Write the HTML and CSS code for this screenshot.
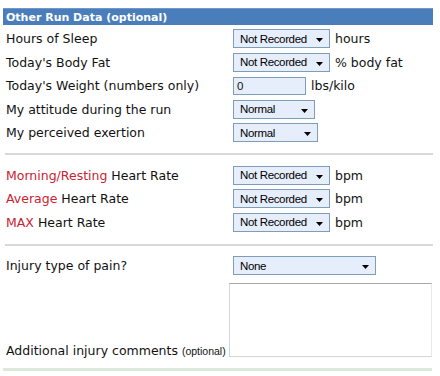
FILE: index.html
```html
<!DOCTYPE html>
<html>
<head>
<meta charset="utf-8">
<link rel="stylesheet" href="styles.css">
</head>
<body>
<div class="panel">
  <div class="header">Other Run Data (optional)</div>

  <div class="section first">
    <div class="row">
      <div class="label">Hours of Sleep</div>
      <div class="field"><span class="select w97">Not Recorded<svg class="arrow" width="7" height="4" viewBox="0 0 7 4"><path d="M0 0H7L3.5 4Z"/></svg></span><span class="unit">hours</span></div>
    </div>
    <div class="row">
      <div class="label">Today's Body Fat</div>
      <div class="field"><span class="select w97">Not Recorded<svg class="arrow" width="7" height="4" viewBox="0 0 7 4"><path d="M0 0H7L3.5 4Z"/></svg></span><span class="unit">% body fat</span></div>
    </div>
    <div class="row">
      <div class="label">Today's Weight (numbers only)</div>
      <div class="field"><span class="input">0</span><span class="unit">lbs/kilo</span></div>
    </div>
    <div class="row">
      <div class="label">My attitude during the run</div>
      <div class="field"><span class="select w82">Normal<svg class="arrow" width="7" height="4" viewBox="0 0 7 4"><path d="M0 0H7L3.5 4Z"/></svg></span></div>
    </div>
    <div class="row">
      <div class="label">My perceived exertion</div>
      <div class="field"><span class="select w85">Normal<svg class="arrow" width="7" height="4" viewBox="0 0 7 4"><path d="M0 0H7L3.5 4Z"/></svg></span></div>
    </div>
  </div>

  <div class="sep"></div>

  <div class="section">
    <div class="row">
      <div class="label"><span class="red">Morning/Resting</span> Heart Rate</div>
      <div class="field"><span class="select w97">Not Recorded<svg class="arrow" width="7" height="4" viewBox="0 0 7 4"><path d="M0 0H7L3.5 4Z"/></svg></span><span class="unit">bpm</span></div>
    </div>
    <div class="row">
      <div class="label"><span class="red">Average</span> Heart Rate</div>
      <div class="field"><span class="select w97">Not Recorded<svg class="arrow" width="7" height="4" viewBox="0 0 7 4"><path d="M0 0H7L3.5 4Z"/></svg></span><span class="unit">bpm</span></div>
    </div>
    <div class="row">
      <div class="label"><span class="red">MAX</span> Heart Rate</div>
      <div class="field"><span class="select w97">Not Recorded<svg class="arrow" width="7" height="4" viewBox="0 0 7 4"><path d="M0 0H7L3.5 4Z"/></svg></span><span class="unit">bpm</span></div>
    </div>
  </div>

  <div class="sep sep2"></div>

  <div class="section">
    <div class="row">
      <div class="label">Injury type of pain?</div>
      <div class="field"><span class="select w143">None<svg class="arrow" width="7" height="4" viewBox="0 0 7 4"><path d="M0 0H7L3.5 4Z"/></svg></span></div>
    </div>
    <div class="row tall">
      <div class="label">Additional injury comments <span class="small">(optional)</span></div>
      <div class="textarea"></div>
    </div>
  </div>

  <div class="footline"></div>
</div>
</body>
</html>
```

FILE: styles.css
```css
html, body {
  margin: 0;
  padding: 0;
  background: #ffffff;
}

.panel {
  padding: 8px 0 0 3px;
  width: 430px;
  font-family: "DejaVu Sans", Verdana, sans-serif;
  font-size: 12.5px;
  color: #111;
}

.header {
  height: 17px;
  line-height: 17px;
  background: #4a7ebb;
  border-top: 1px solid #6f98c9;
  box-sizing: border-box;
  color: #fff;
  font-weight: bold;
  font-size: 11px;
  padding-left: 3px;
}

.section.first {
  margin-top: 2px;
}

.row {
  display: flex;
  align-items: center;
  height: 23.5px;
}

.row.tall {
  height: 80px;
  align-items: flex-end;
}

.label {
  width: 230px;
  padding-left: 3px;
  box-sizing: border-box;
  white-space: nowrap;
}

.row.tall .label {
  width: 226px;
  padding-bottom: 0;
}

.red {
  color: #cc2233;
}

.small {
  font-family: "Liberation Sans", Arial, sans-serif;
  font-size: 10.5px;
}

.field {
  display: flex;
  align-items: center;
}

.select {
  position: relative;
  display: flex;
  align-items: center;
  height: 19px;
  box-sizing: border-box;
  border: 1px solid #7f9db9;
  background: #e6eefb;
  font-family: "Liberation Sans", Arial, sans-serif;
  font-size: 11.5px;
  color: #000;
  padding-left: 6px;
  letter-spacing: -0.35px;
}

.arrow {
  position: absolute;
  right: 6px;
  top: 8px;
  fill: #000;
}

.w97 { width: 97px; }
.w82 { width: 82px; }
.w85 { width: 85px; }
.w143 { width: 143px; }

.input {
  display: flex;
  align-items: center;
  width: 73px;
  height: 18px;
  box-sizing: border-box;
  border: 1px solid #7f9db9;
  background: #e6eefb;
  font-family: "Liberation Sans", Arial, sans-serif;
  font-size: 11.5px;
  padding-left: 3px;
}

.unit {
  margin-left: 5px;
}

.sep {
  margin: 8px 0 9px 2px;
  height: 2px;
  background: #d8d8d8;
  width: 428px;
}

.sep2 {
  margin-top: 10px;
  margin-bottom: 8px;
}

.textarea {
  width: 203px;
  height: 74px;
  box-sizing: border-box;
  margin-bottom: 1px;
  border-top: 1px solid #a8a8a8;
  border-left: 1px solid #d4d4d4;
  border-bottom: 1px solid #d4d4d4;
  border-right: 1px solid #e8e8e8;
}

.footline {
  margin-top: 10px;
  height: 3px;
  background: #dde8dc;
  width: 429px;
}
```
